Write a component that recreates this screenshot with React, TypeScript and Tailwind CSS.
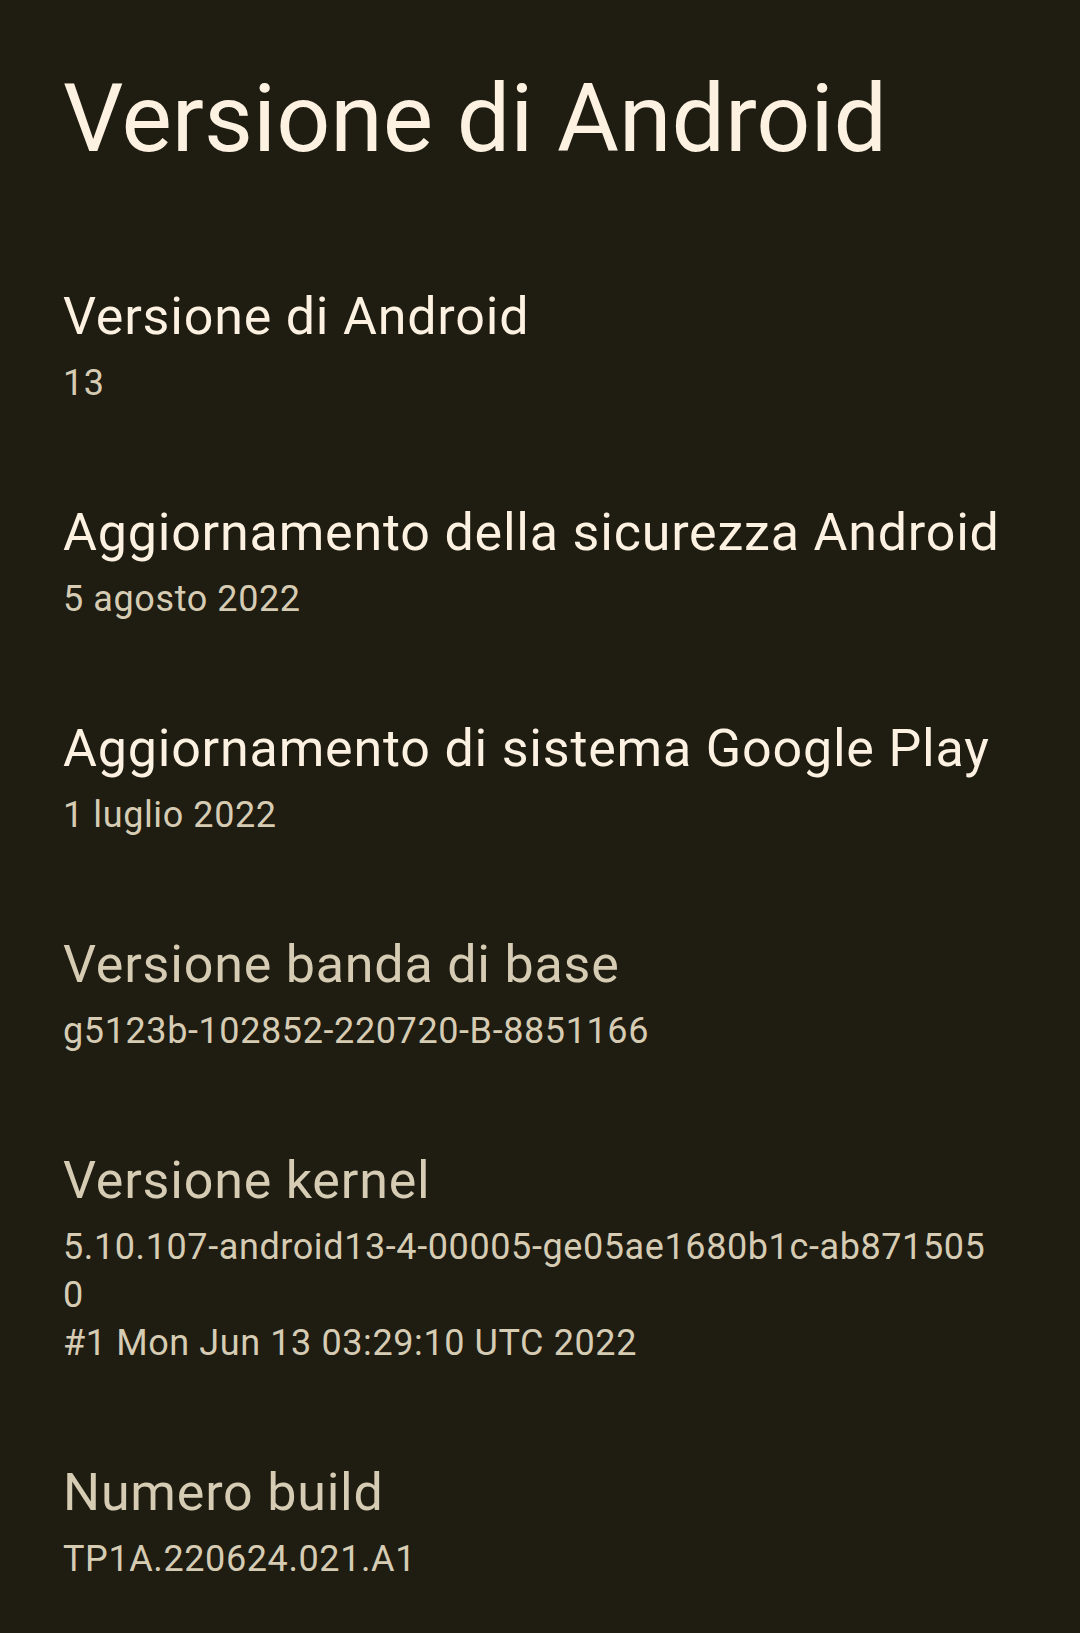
import React from "react";

const items: { title: string; lines: string[]; dim?: boolean }[] = [
  { title: "Versione di Android", lines: ["13"] },
  { title: "Aggiornamento della sicurezza Android", lines: ["5 agosto 2022"] },
  { title: "Aggiornamento di sistema Google Play", lines: ["1 luglio 2022"] },
  { title: "Versione banda di base", lines: ["g5123b-102852-220720-B-8851166"], dim: true },
  {
    title: "Versione kernel",
    lines: [
      "5.10.107-android13-4-00005-ge05ae1680b1c-ab871505",
      "0",
      "#1 Mon Jun 13 03:29:10 UTC 2022",
    ],
    dim: true,
  },
  { title: "Numero build", lines: ["TP1A.220624.021.A1"], dim: true },
];

export default function App() {
  return (
    <div
      className="w-[1080px] h-[1633px] overflow-hidden bg-[#1f1c12] pl-[63px] pr-[40px] pt-[62px]"
      style={{ fontFamily: "Roboto, 'Noto Sans', sans-serif" }}
    >
      <h1 className="text-[95px] leading-[114px] text-[#fdf2e1] font-normal">Versione di Android</h1>
      <div className="mt-[109px] flex flex-col gap-[94px]">
        {items.map((it) => (
          <div key={it.title} className="flex flex-col">
            <div
              className={`text-[52px] leading-[64px] tracking-[0.8px] whitespace-nowrap ${
                it.dim ? "text-[#d6ccb4]" : "text-[#fdf2e1]"
              }`}
            >
              {it.title}
            </div>
            <div className="mt-[10px] text-[36px] leading-[48px] tracking-[0.6px] text-[#d6ccb4]">
              {it.lines.map((l, i) => (
                <div key={i} className="whitespace-nowrap">
                  {l}
                </div>
              ))}
            </div>
          </div>
        ))}
      </div>
    </div>
  );
}
